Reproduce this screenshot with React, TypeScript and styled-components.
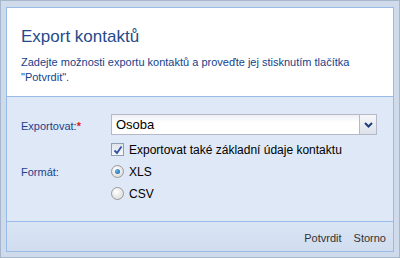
import * as React from 'react';
import styled, { createGlobalStyle } from 'styled-components';

const Global = createGlobalStyle`
  html, body { margin: 0; padding: 0; background: #ffffff; }
  body { font-family: Tahoma, "Liberation Sans", "DejaVu Sans", sans-serif; }
`;

export default function App() {
  const [format, setFormat] = React.useState('xls');
  const [basic, setBasic] = React.useState(true);

  return (
    <>
      <Global />
      <Window>
        <Frame>
          <Header>
            <Title>Export kontaktů</Title>
            <Description>
              Zadejte možnosti exportu kontaktů a proveďte jej stisknutím tlačítka "Potvrdit".
            </Description>
          </Header>
          <Body>
            <Row>
              <Label>
                Exportovat:<Required>*</Required>
              </Label>
              <Select>
                <SelectText>Osoba</SelectText>
                <Trigger>
                  <svg width="9" height="6" viewBox="0 0 9 6">
                    <path d="M1 1 L4.5 4.5 L8 1" fill="none" stroke="#1f3d7a" strokeWidth="2" />
                  </svg>
                </Trigger>
              </Select>
            </Row>
            <Row>
              <Label />
              <Option onClick={() => setBasic(!basic)}>
                <CheckBox>
                  {basic && (
                    <svg width="10" height="10" viewBox="0 0 10 10">
                      <path d="M1.5 5.5 L4 8 L8.5 1.5" fill="none" stroke="#3152a6" strokeWidth="1.8" />
                    </svg>
                  )}
                </CheckBox>
                Exportovat také základní údaje kontaktu
              </Option>
            </Row>
            <Row>
              <Label>Formát:</Label>
              <Option onClick={() => setFormat('xls')}>
                <Radio $checked={format === 'xls'} />
                XLS
              </Option>
            </Row>
            <Row>
              <Label />
              <Option onClick={() => setFormat('csv')}>
                <Radio $checked={format === 'csv'} />
                CSV
              </Option>
            </Row>
          </Body>
          <Footer>
            <FooterButton>Potvrdit</FooterButton>
            <FooterButton>Storno</FooterButton>
          </Footer>
        </Frame>
      </Window>
    </>
  );
}

const Window = styled.div`
  width: 400px;
  height: 258px;
  box-sizing: border-box;
  border: 1px solid #a6b6cc;
  background: #cfdbeb;
  padding: 6px 5px 5px 5px;
`;
const Frame = styled.div`
  height: 100%;
  box-sizing: border-box;
  border: 1px solid #99bbe8;
  display: flex;
  flex-direction: column;
  background: #dfe8f6;
`;
const Header = styled.div`
  background: #ffffff;
  border-bottom: 1px solid #99bbe8;
  height: 89px;
  box-sizing: border-box;
  padding: 18px 14px 0 14px;
`;
const Title = styled.div`
  font-size: 17px;
  color: #254a8c;
  line-height: 21px;
`;
const Description = styled.div`
  margin-top: 8px;
  font-size: 11px;
  line-height: 15px;
  color: #15428b;
`;
const Body = styled.div`
  flex: 1;
  padding: 17px 16px 0 14px;
  display: flex;
  flex-direction: column;
`;
const Row = styled.div`
  display: flex;
  align-items: center;
  min-height: 21px;
  margin-bottom: 1px;
`;
const Label = styled.div`
  width: 90px;
  font-size: 11px;
  color: #1b428c;
`;
const Required = styled.span`
  color: #e02020;
  font-weight: bold;
`;
const Select = styled.div`
  flex: 1;
  height: 21px;
  box-sizing: border-box;
  border: 1px solid #b5b8c8;
  background: linear-gradient(#eef0f3, #ffffff 40%);
  display: flex;
  align-items: center;
  margin-bottom: 3px;
`;
const SelectText = styled.div`
  flex: 1;
  padding-left: 4px;
  font-size: 13px;
  color: #000;
`;
const Trigger = styled.div`
  width: 17px;
  height: 19px;
  box-sizing: border-box;
  border-left: 1px solid #b5b8c8;
  background: linear-gradient(#f6f7f9, #dde2ea);
  display: flex;
  align-items: center;
  justify-content: center;
`;
const Option = styled.div`
  display: flex;
  align-items: center;
  gap: 5px;
  font-size: 12px;
  color: #000;
  cursor: pointer;
`;
const CheckBox = styled.div`
  width: 13px;
  height: 13px;
  box-sizing: border-box;
  border: 1px solid #8f9fb5;
  background: linear-gradient(#dfe4ec, #f8f9fb);
  display: flex;
  align-items: center;
  justify-content: center;
`;
const Radio = styled.div<{ $checked: boolean }>`
  width: 13px;
  height: 13px;
  box-sizing: border-box;
  border-radius: 50%;
  border: 1px solid #9a9a9a;
  background: radial-gradient(circle at 40% 35%, #ffffff, #d4d4d4);
  display: flex;
  align-items: center;
  justify-content: center;
  &::after {
    content: '';
    display: ${(p) => (p.$checked ? 'block' : 'none')};
    width: 5px;
    height: 5px;
    border-radius: 50%;
    background: radial-gradient(circle at 35% 35%, #5cb3ec, #1f5f9e);
  }
`;
const Footer = styled.div`
  height: 27px;
  border-top: 1px solid #99bbe8;
  background: linear-gradient(#dae5f4, #d0ddef);
  display: flex;
  align-items: center;
  justify-content: flex-end;
  gap: 12px;
  padding-right: 7px;
  padding-top: 2px;
`;
const FooterButton = styled.span`
  font-size: 11px;
  color: #333333;
  cursor: pointer;
`;
